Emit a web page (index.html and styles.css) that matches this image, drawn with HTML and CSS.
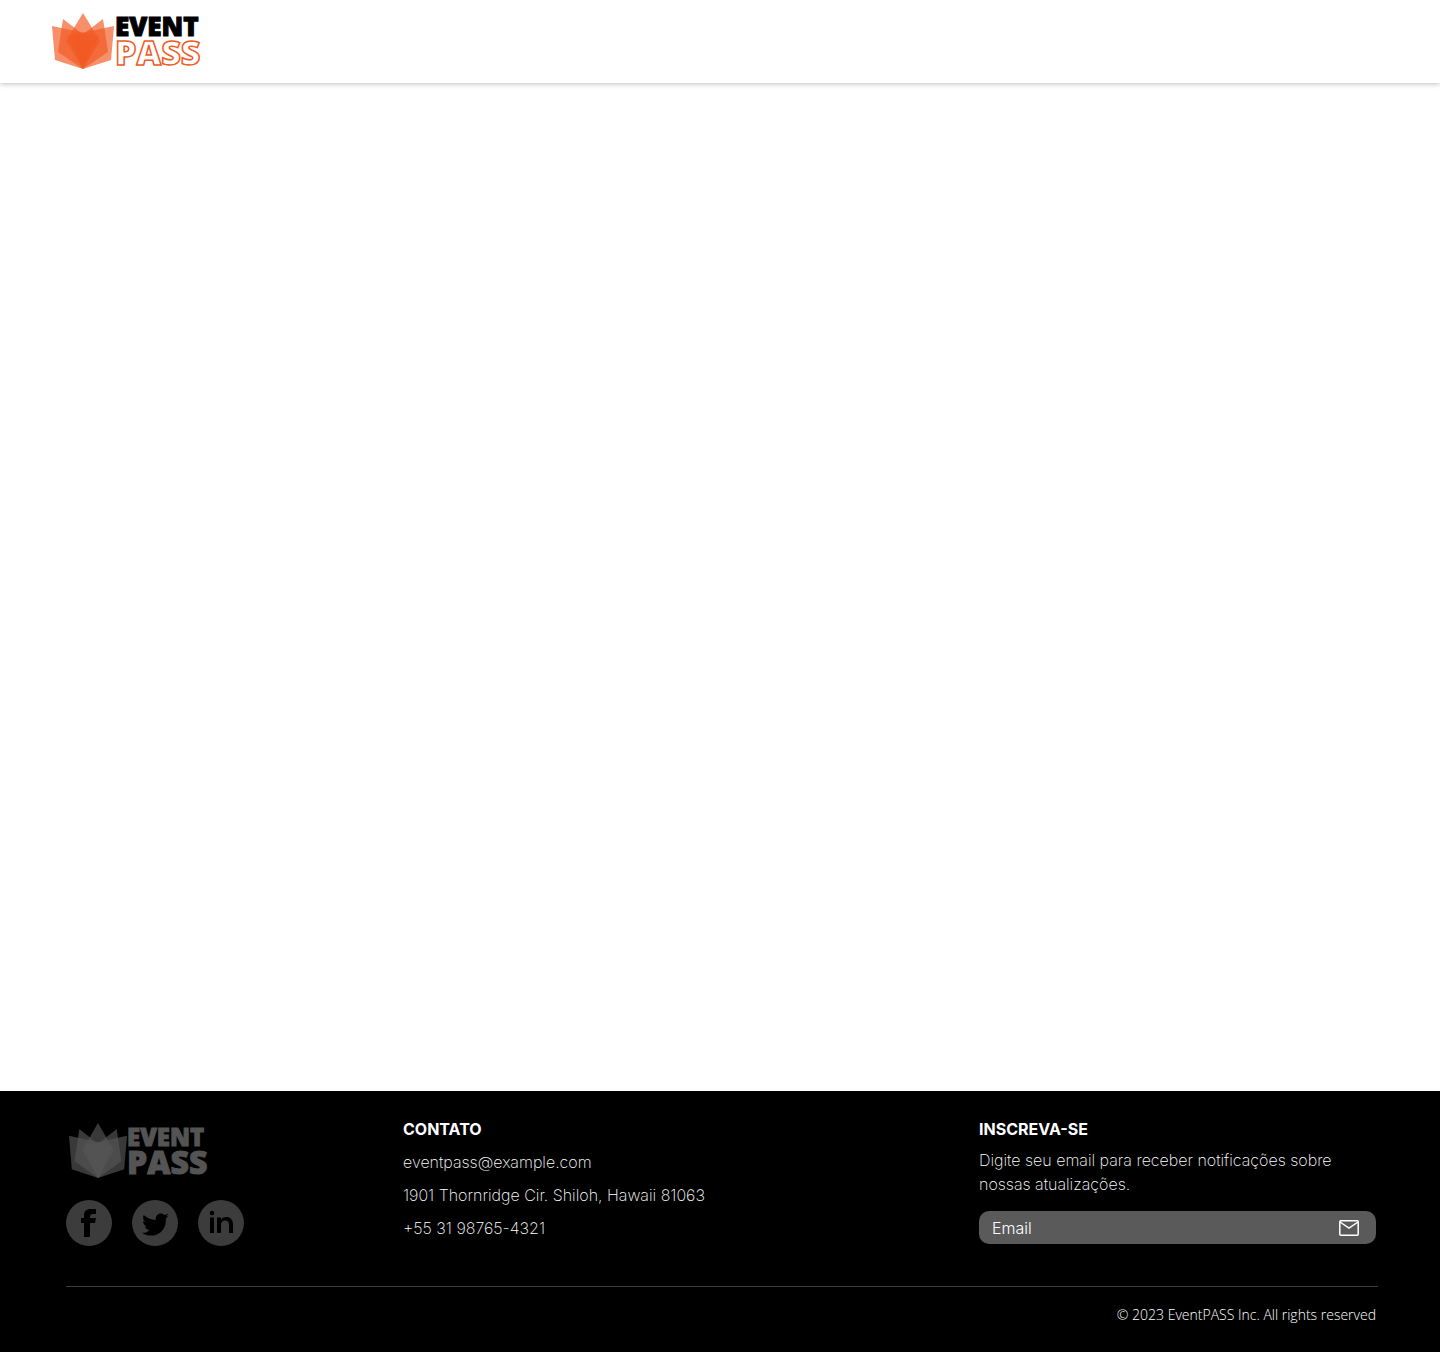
FILE: index.html
```html
<!DOCTYPE html>
<html lang="pt-BR">
<head>
<meta charset="utf-8">
<meta name="viewport" content="width=device-width, initial-scale=1">
<title>EventPASS</title>
<link rel="stylesheet" href="styles.css">
</head>
<body>
<header class="site-header">
  <a class="brand" href="#" aria-label="EventPASS">
    <svg class="brand-logo" viewBox="0 0 152 58">
      <g class="petals">
        <path d="M0 13 47 23 31 56 3 47Z"/>
        <path d="M62 13 15 23 31 56 59 47Z"/>
        <path d="M11 6 40 28 31 56 6 39Z"/>
        <path d="M51 6 22 28 31 56 56 39Z"/>
        <path d="M31 0 48 28 31 56 14 28Z"/>
      </g>
      <text class="word-event" x="63" y="23">EVENT</text>
      <text class="word-pass" x="63" y="52" stroke-width="1.5">PASS</text>
    </svg>
  </a>
</header>
<main class="content"></main>
<footer class="site-footer">
  <div class="footer-columns">
    <div class="footer-brand">
      <svg class="footer-logo" viewBox="0 0 144 56">
        <svg x="3" y="0" width="58" height="55" viewBox="0 0 62 56" preserveAspectRatio="none">
          <g class="petals-muted">
            <path d="M0 13 47 23 31 56 3 47Z"/>
            <path d="M62 13 15 23 31 56 59 47Z"/>
            <path d="M11 6 40 28 31 56 6 39Z"/>
            <path d="M51 6 22 28 31 56 56 39Z"/>
            <path d="M31 0 48 28 31 56 14 28Z"/>
          </g>
        </svg>
        <text class="muted-event" x="61" y="23">EVENT</text>
        <text class="muted-pass" x="61" y="51">PASS</text>
      </svg>
      <nav class="social" aria-label="Redes sociais">
        <a href="#" aria-label="Facebook"><svg viewBox="0 0 46 46"><path d="M18 37V23H15V18H18V16C18 11 20 9 25 9H30V14H27C25 14 24 15 24 17V18H30L29 23H24V37Z"/></svg></a>
        <a href="#" aria-label="Twitter"><svg viewBox="0 0 46 46"><path transform="translate(10 12) scale(1.1)" d="M23.950 3.400 21.800 4.200C22.600 3.600 23.300 2.700 23.500 1.700L20.600 2.800C18.500.7 15.300 1 13.600 3 12.500 4.200 12.200 5.700 12.500 7.200 8.500 7.200 4.500 5.500 1.500 2.800.5 5 1 7.500 3 9L.8 8.500C1 10.700 2.500 12.500 4.600 13.200H2.500C3.200 15 4.800 16.300 6.800 16.500 4.900 18.200 2.500 19 0 18.800 3.500 21.500 8.500 22.200 13 20.600 18.500 18.700 21.700 13.500 21.700 7.500V6Z"/></svg></a>
        <a href="#" aria-label="LinkedIn"><svg viewBox="0 0 46 46"><circle cx="14" cy="13" r="2.3"/><path d="M12 17.500h4V33h-4ZM19 17.500h4v2c1-1.600 2.700-2.500 5-2.500 4.500 0 7 2.500 7 7.500V33h-4v-8c0-3-1.300-4.500-3.800-4.500-2.700 0-4.200 1.700-4.200 4.700V33h-4Z"/></svg></a>
      </nav>
    </div>
    <section class="contact">
      <h2>CONTATO</h2>
      <p>eventpass@example.com</p>
      <p>1901 Thornridge Cir. Shiloh, Hawaii 81063</p>
      <p>+55 31 98765-4321</p>
    </section>
    <section class="subscribe">
      <h2>INSCREVA-SE</h2>
      <p>Digite seu email para receber notificações sobre nossas atualizações.</p>
      <form class="subscribe-form">
        <input type="email" placeholder="Email" aria-label="Email">
        <button type="submit" aria-label="Inscrever"><svg viewBox="0 0 22 18" stroke-width="1.5"><rect x="1.800" y="1.800" width="18.400" height="14.400" rx="1"/><path d="M2 3 11 9 20 3"/></svg></button>
      </form>
    </section>
  </div>
  <p class="copyright">© 2023 EventPASS Inc. All rights reserved</p>
</footer>
</body>
</html>
```
FILE: styles.css
```css
* { box-sizing: border-box; }

body {
  margin: 0;
  min-height: 100vh;
  display: flex;
  flex-direction: column;
  background: #fff;
  font-family: Inter, "Liberation Sans", sans-serif;
  font-size: 16px;
  line-height: 24px;
}

h2, p { margin: 0; }

.site-header {
  padding: 13px 52px 12px;
  box-shadow: 0 1px 5px rgba(0, 0, 0, 0.25);
}

.brand { display: block; width: 152px; }
.brand-logo { display: block; width: 152px; height: 58px; overflow: visible; }
.petals { fill: #f15a24; fill-opacity: 0.68; }

.word-event, .word-pass, .muted-event, .muted-pass {
  font-family: "Open Sans", sans-serif;
  font-weight: 800;
}
.word-event { font-size: 26px; fill: #000; stroke: #000; stroke-width: 1px; }
.word-pass { font-size: 34px; fill: #fff; stroke: #f15a24; }

.content { flex: 1; }

.site-footer {
  padding: 26px 62px 27px 66px;
  background: #000;
  color: #fff;
  font-weight: 200;
}

.footer-columns {
  display: grid;
  grid-template-columns: 337fr 576fr 399fr;
  padding-bottom: 40px;
  border-bottom: 1px solid #3c3c3c;
}

.footer-brand {
  display: flex;
  flex-direction: column;
  gap: 21px;
  padding-top: 6px;
}
.footer-logo { display: block; width: 144px; height: 56px; overflow: visible; }
.petals-muted { fill: #545454; fill-opacity: 0.68; }
.muted-event, .muted-pass { fill: #545454; stroke: #545454; stroke-width: 1px; }
.muted-event { font-size: 24px; }
.muted-pass { font-size: 32px; }

.social { display: flex; gap: 20px; }
.social a {
  width: 46px;
  height: 46px;
  border-radius: 50%;
  background: #3c3c3c;
}
.social svg { display: block; width: 46px; height: 46px; fill: #000; }

h2 { font-size: 16px; line-height: 24px; font-weight: 700; }

.contact { display: flex; flex-direction: column; gap: 9px; }
.subscribe { padding-right: 2px; }
.subscribe p { padding-top: 7px; }

.subscribe-form {
  display: flex;
  align-items: center;
  height: 33px;
  margin-top: 15px;
  padding: 0 16px 0 13px;
  border-radius: 10px;
  background: #5a5a5a;
}
.subscribe-form input {
  flex: 1;
  min-width: 0;
  padding: 0;
  border: 0;
  outline: 0;
  background: none;
  color: #fff;
  font: inherit;
  font-weight: 300;
}
.subscribe-form input::placeholder { color: #fff; opacity: 1; }
.subscribe-form button { padding: 0; border: 0; background: none; }
.subscribe-form svg {
  display: block;
  width: 22px;
  height: 18px;
  fill: none;
  stroke: #fff;
}

.copyright {
  padding: 18px 2px 0 0;
  font-family: "Open Sans", sans-serif;
  font-weight: 300;
  font-size: 14px;
  line-height: 20px;
  text-align: right;
}
```
